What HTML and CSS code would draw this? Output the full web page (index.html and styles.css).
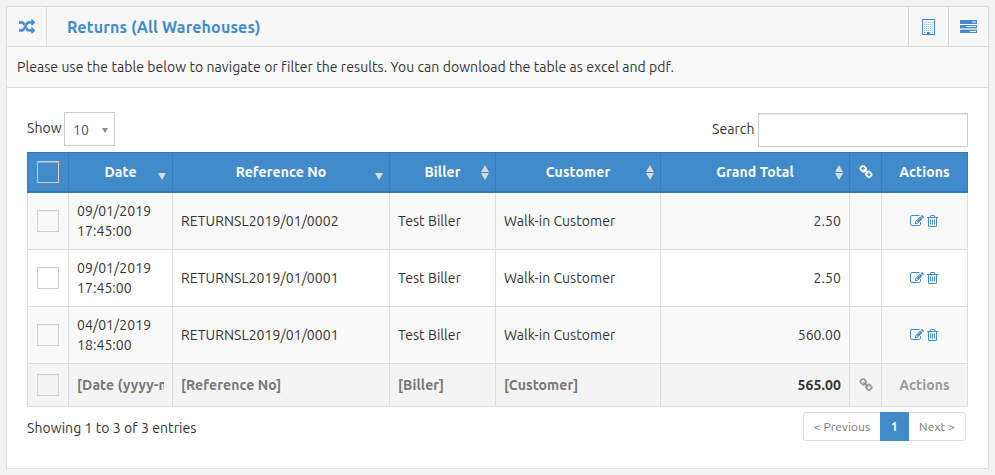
FILE: index.html
```html
<!DOCTYPE html>
<html lang="en">
<head>
<meta charset="utf-8">
<title>Returns (All Warehouses)</title>
<link rel="stylesheet" href="styles.css">
</head>
<body>
<svg class="sprite" aria-hidden="true">
  <symbol id="random" viewBox="0 0 1792 1792"><path d="M666 481q-60 92-137 273-22-45-37-72.5t-40.5-63.5-51-56.5-63-35-81.5-14.5h-224q-14 0-23-9t-9-23v-192q0-14 9-23t23-9h224q250 0 410 225zm1126 799q0 14-9 23l-320 320q-9 9-23 9-13 0-22.5-9.5t-9.5-22.5v-192q-32 0-85 .5t-81 1-73-1-71-5-64-10.5-63-18.5-58-28.5-59-40-55-53.5-56-69.5q59-93 136-273 22 45 37 72.5t40.5 63.5 51 56.5 63 35 81.5 14.5h256v-192q0-14 9-23t23-9q12 0 24 10l319 319q9 9 9 23zm0-896q0 14-9 23l-320 320q-9 9-23 9-13 0-22.5-9.5t-9.5-22.5v-192h-256q-48 0-87 15t-69 45-51 61.5-45 77.5q-32 62-78 171-29 66-49.5 111t-54 105-64 100-74 83-90 68.5-106.5 42-128 16.5h-224q-14 0-23-9t-9-23v-192q0-14 9-23t23-9h224q48 0 87-15t69-45 51-61.5 45-77.5q32-62 78-171 29-66 49.5-111t54-105 64-100 74-83 90-68.5 106.5-42 128-16.5h256v-192q0-14 9-23t23-9q12 0 24 10l319 319q9 9 9 23z"/></symbol>
  <symbol id="tasks" viewBox="0 0 17 14"><path fill-rule="evenodd" d="M.5 0h16q.5 0 .5.5v3q0 .5-.5.5H.5Q0 4 0 3.500v-3Q0 0 .5 0zM12 1.500v1h4v-1zM.5 5h16q.5 0 .5.5v2q0 .5-.5.5H.5Q0 8 0 7.500v-2Q0 5 .5 5zM6 6v1h10V6zM.5 10h16q.5 0 .5.5v2q0 .5-.5.5H.5Q0 13 0 12.500v-2Q0 10 .5 10zM10 11v1h6v-1z"/><path opacity=".35" d="M0 8h17v2H0z"/></symbol>
  <symbol id="building" viewBox="0 0 13 16"><path fill-rule="evenodd" d="M0 0h13v16H0zM1 1v14h4v-2h3v2h4V1z"/><path opacity=".55" d="M2 3h1v1H2zm2 0h1v1H4zm2 0h1v1H6zm2 0h1v1H8zm2 0h1v1h-1zM2 5h1v1H2zm2 0h1v1H4zm2 0h1v1H6zm2 0h1v1H8zm2 0h1v1h-1zM2 7h1v1H2zm2 0h1v1H4zm2 0h1v1H6zm2 0h1v1H8zm2 0h1v1h-1zM2 9h1v1H2zm2 0h1v1H4zm2 0h1v1H6zm2 0h1v1H8zm2 0h1v1h-1zM2 11h1v1H2zm2 0h1v1H4zm2 0h1v1H6zm2 0h1v1H8zm2 0h1v1h-1zM2 13h1v1H2zm8 0h1v1h-1z"/></symbol>
  <symbol id="chain" viewBox="0 0 1792 1792"><path d="M1520 1216q0-40-28-68l-208-208q-28-28-68-28-42 0-72 32 3 3 19 18.500t21.500 21.500 15 19 13 25.500 3.500 27.500q0 40-28 68t-68 28q-15 0-27.500-3.500t-25.500-13-19-15-21.500-21.500-18.500-19q-33 31-33 73 0 40 28 68l206 207q27 27 68 27 40 0 68-26l147-146q28-28 28-67zm-703-705q0-40-28-68l-206-207q-28-28-68-28-39 0-68 27l-147 146q-28 28-28 67 0 40 28 68l208 208q27 27 68 27 42 0 72-31-3-3-19-18.500t-21.500-21.500-15-19-13-25.500-3.500-27.500q0-40 28-68t68-28q15 0 27.500 3.500t25.500 13 19 15 21.500 21.500 18.500 19q33-31 33-73zm895 705q0 120-85 203l-147 146q-83 83-203 83-121 0-204-85l-206-207q-83-83-83-203 0-123 88-209l-88-88q-86 88-208 88-120 0-204-84l-208-208q-84-84-84-204t85-203l147-146q83-83 203-83 121 0 204 85l206 207q83 83 83 203 0 123-88 209l88 88q86-88 208-88 120 0 204 84l208 208q84 84 84 204z"/></symbol>
  <symbol id="edit" viewBox="0 0 1792 1792"><path d="M888 1184l116-116-152-152-116 116v56h96v96h56zm440-720q-16-16-33 1l-350 350q-17 17-1 33t33-1l350-350q17-17 1-33zm80 594v190q0 119-84.500 203.500t-203.500 84.500h-832q-119 0-203.500-84.500t-84.500-203.500v-832q0-119 84.500-203.500t203.500-84.500h832q63 0 117 25 15 7 18 23 3 17-9 29l-49 49q-14 14-32 8-23-6-45-6h-832q-66 0-113 47t-47 113v832q0 66 47 113t113 47h832q66 0 113-47t47-113v-126q0-13 9-22l64-64q15-15 35-7t20 29zm-96-738l288 288-672 672h-288v-288zm444 132l-92 92-288-288 92-92q28-28 68-28t68 28l152 152q28 28 28 68t-28 68z"/></symbol>
  <symbol id="trash" viewBox="192 0 1408 1792"><path d="M704 736v576q0 14-9 23t-23 9h-64q-14 0-23-9t-9-23v-576q0-14 9-23t23-9h64q14 0 23 9t9 23zm256 0v576q0 14-9 23t-23 9h-64q-14 0-23-9t-9-23v-576q0-14 9-23t23-9h64q14 0 23 9t9 23zm256 0v576q0 14-9 23t-23 9h-64q-14 0-23-9t-9-23v-576q0-14 9-23t23-9h64q14 0 23 9t9 23zm128 724v-948h-896v948q0 22 7 40.500t14.500 27 10.500 8.500h832q3 0 10.500-8.500t14.500-27 7-40.500zm-672-1076h448l-48-117q-7-9-17-11h-317q-10 2-17 11zm928 32v64q0 14-9 23t-23 9h-96v948q0 83-47 143.500t-113 60.500h-832q-66 0-113-58.500t-47-141.500v-952h-96q-14 0-23-9t-9-23v-64q0-14 9-23t23-9h309l70-167q15-37 54-63t79-26h320q40 0 79 26t54 63l70 167h309q14 0 23 9t9 23z"/></symbol>
  <symbol id="sort-down" viewBox="0 0 8 15"><path d="M0 8h8l-4 7z"/></symbol>
  <symbol id="sort-both" viewBox="0 0 8 15"><path d="M4 0L8 7H0zM0 8h8l-4 7z"/></symbol>
</svg>
<main class="box">
  <header class="box-header">
    <span class="head-icon first"><svg class="i16"><use href="#random"/></svg></span>
    <h2>Returns (All Warehouses)</h2>
    <a class="head-icon"><svg class="i-building"><use href="#building"/></svg></a>
    <a class="head-icon"><svg class="i-tasks"><use href="#tasks"/></svg></a>
  </header>
  <p class="intro">Please use the table below to navigate or filter the results. You can download the table as excel and pdf.</p>
  <section class="content">
    <div class="controls">
      <label class="length"><span class="show">Show</span><span class="select"><span>10</span><i class="caret"></i></span></label>
      <label class="search"><span class="search-label">Search</span><input type="text" aria-label="Search"></label>
    </div>
    <table>
      <colgroup><col class="c-check"><col class="c-date"><col class="c-ref"><col class="c-biller"><col class="c-customer"><col class="c-total"><col class="c-link"><col class="c-actions"></colgroup>
      <thead>
        <tr>
          <th><i class="check"></i></th>
          <th>Date<svg class="sort"><use href="#sort-down"/></svg></th>
          <th>Reference No<svg class="sort"><use href="#sort-down"/></svg></th>
          <th>Biller<svg class="sort"><use href="#sort-both"/></svg></th>
          <th>Customer<svg class="sort"><use href="#sort-both"/></svg></th>
          <th>Grand Total<svg class="sort"><use href="#sort-both"/></svg></th>
          <th><svg class="i14"><use href="#chain"/></svg></th>
          <th>Actions</th>
        </tr>
      </thead>
      <tbody>
        <tr><td><i class="check"></i></td><td>09/01/2019 17:45:00</td><td>RETURNSL2019/01/0002</td><td>Test Biller</td><td>Walk-in Customer</td><td class="total">2.50</td><td></td><td><div class="acts"><svg class="i14"><use href="#edit"/></svg><svg class="i-trash"><use href="#trash"/></svg></div></td></tr>
        <tr><td><i class="check"></i></td><td>09/01/2019 17:45:00</td><td>RETURNSL2019/01/0001</td><td>Test Biller</td><td>Walk-in Customer</td><td class="total">2.50</td><td></td><td><div class="acts"><svg class="i14"><use href="#edit"/></svg><svg class="i-trash"><use href="#trash"/></svg></div></td></tr>
        <tr><td><i class="check"></i></td><td>04/01/2019 18:45:00</td><td>RETURNSL2019/01/0001</td><td>Test Biller</td><td>Walk-in Customer</td><td class="total">560.00</td><td></td><td><div class="acts"><svg class="i14"><use href="#edit"/></svg><svg class="i-trash"><use href="#trash"/></svg></div></td></tr>
      </tbody>
      <tfoot>
        <tr>
          <th><i class="check"></i></th>
          <th><div class="clip">[Date (yyyy-m</div></th>
          <th>[Reference No]</th>
          <th>[Biller]</th>
          <th>[Customer]</th>
          <th class="total">565.00</th>
          <th class="muted"><svg class="i14"><use href="#chain"/></svg></th>
          <th class="muted">Actions</th>
        </tr>
      </tfoot>
    </table>
    <div class="bottom">
      <span class="info">Showing 1 to 3 of 3 entries</span>
      <nav class="pages"><a class="prev">&lt; Previous</a><a class="active">1</a><a class="next">Next &gt;</a></nav>
    </div>
  </section>
</main>
</body>
</html>
```
FILE: styles.css
```css
* { box-sizing: border-box; }
body {
  margin: 0;
  padding: 6px;
  background: #f2f2f2;
  color: #333;
  font: 14px/20px Ubuntu, "Noto Sans", sans-serif;
  letter-spacing: .065px;
}
svg { display: block; fill: currentColor; }
.sprite { display: none; }
.box { width: 983px; height: 463px; background: #fff; border: 1px solid #dbdee0; }
.box-header { display: flex; height: 40px; background: #f7f7f7; border-bottom: 1px solid #dbdee0; color: #428bca; }
.head-icon { display: flex; align-items: center; justify-content: center; width: 40px; height: 39px; border-left: 1px solid #d0d3d6; }
.head-icon.first { border-left: 0; border-right: 1px solid #dbdee0; }
.i16 { width: 16px; height: 16px; stroke: currentColor; stroke-width: 50px; }
.i14 { width: 14px; height: 14px; }
.i-building { width: 13px; height: 16px; }
.i-tasks { width: 17px; height: 14px; }
.i-trash { width: 11px; height: 14px; }
h2 { flex: 1; margin: 0; padding-left: 20px; font-size: 16px; line-height: 41px; font-weight: 700; letter-spacing: .14px; white-space: nowrap; }
.intro { height: 41px; margin: 0; padding-left: 10px; line-height: 41px; background: #f9f9f9; border-bottom: 1px solid #dbdee0; white-space: nowrap; }
.content { padding: 24px 20px 0; }
.controls { display: flex; justify-content: space-between; height: 40px; }
.length, .search { display: flex; }
.length { line-height: 33px; }
.show { width: 37px; }
.select { display: flex; justify-content: space-between; align-items: center; width: 51px; height: 34px; padding: 2px 6px 0 8px; border: 1px solid #ccc; color: #555; }
.caret { border: 3.500px solid transparent; border-top: 5px solid #888; border-bottom: 0; }
.search { line-height: 33px; padding-top: 1px; }
.search-label { width: 46px; }
.search input { width: 210px; height: 34px; border: 1px solid #ccc; box-shadow: inset 0 1px 1px rgba(0,0,0,.075); background: #fff; outline: 0; }
table { width: 941px; table-layout: fixed; border-collapse: separate; border-spacing: 0; }
.c-check { width: 42px; }
.c-date { width: 104px; }
.c-ref { width: 217px; }
.c-biller { width: 106px; }
.c-customer { width: 165px; }
.c-total { width: 189px; }
.c-link { width: 32px; }
.c-actions { width: 86px; }
th, td { padding: 0 8px; border: solid #ddd; border-width: 0 1px 1px 0; text-align: left; vertical-align: middle; }
th:first-child, td:first-child { border-left-width: 1px; padding: 0 9px; }
thead th { position: relative; height: 41px; border-color: #357ebd; border-top-width: 1px; border-bottom-width: 2px; background: #428bca; color: #fff; text-align: center; }
thead th, tfoot th { letter-spacing: .1px; }
tbody td { height: 57px; }
tbody tr:nth-child(odd) { background: #f9f9f9; }
tfoot th { height: 43px; background: #f4f4f4; color: #777; }
.check { display: block; width: 22px; height: 22px; border: 1px solid #d2cfc8; box-shadow: inset 0 1px #f0eeea; }
thead .check { box-shadow: inset 0 1px #7badda; }
.sort { position: absolute; right: 6px; top: 12px; width: 8px; height: 15px; color: #d8dadd; }
.total { text-align: right; }
tfoot .total { color: #333; }
tfoot .muted { color: #999; text-align: center; }
th .i14 { margin: 0 0 0 .5px; stroke: currentColor; stroke-width: 50px; }
.acts { display: flex; gap: 3px; padding-left: 20px; color: #428bca; }
.clip { overflow: hidden; white-space: nowrap; width: 87px; }
.bottom { display: flex; justify-content: space-between; padding: 5px 2px 0 0; }
.info { padding-top: 6px; }
.pages { display: flex; height: 29px; font-size: 12px; color: #777; text-align: center; }
.pages a { border: 1px solid #ddd; line-height: 28px; white-space: nowrap; }
.pages .prev { width: 77px; border-right: 0; border-radius: 3px 0 0 3px; }
.pages .active { width: 29px; background: #428bca; border-color: #428bca; color: #fff; font-weight: 700; }
.pages .next { width: 57px; border-left: 0; border-radius: 0 3px 3px 0; }
```
